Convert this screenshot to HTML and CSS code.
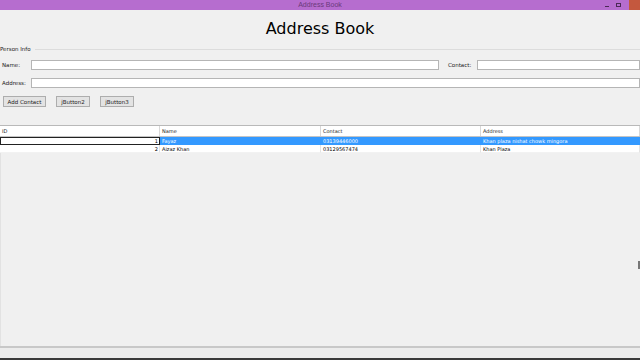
FILE: index.html
```html
<!DOCTYPE html>
<html>
<head>
<meta charset="utf-8">
<link rel="stylesheet" href="styles.css">
</head>
<body>
<div class="window">
  <div class="titlebar">
    <div class="tb-side"></div>
    <div class="tb-title">Address Book</div>
    <div class="tb-side tb-controls">
      <span class="tb-min"></span>
      <span class="tb-max"></span>
      <span class="tb-close"></span>
    </div>
  </div>
  <div class="heading">Address Book</div>
  <div class="group">
    <div class="group-head"><span class="legend">Person Info</span><span class="group-line"></span></div>
    <div class="row">
      <span class="label">Name:</span>
      <span class="field field-name"></span>
      <span class="label label-contact">Contact:</span>
      <span class="field field-contact"></span>
    </div>
    <div class="row">
      <span class="label">Address:</span>
      <span class="field field-grow"></span>
    </div>
    <div class="row buttons">
      <span class="btn btn-add">Add Contact</span>
      <span class="btn">jButton2</span>
      <span class="btn">jButton3</span>
    </div>
  </div>
  <div class="table-wrap">
    <div class="trow thead">
      <div class="cell">ID</div>
      <div class="cell">Name</div>
      <div class="cell">Contact</div>
      <div class="cell">Address</div>
    </div>
    <div class="trow selected">
      <div class="cell num focus">1</div>
      <div class="cell">Fayaz</div>
      <div class="cell">03139446000</div>
      <div class="cell">Khan plaza nishat chowk mingora</div>
    </div>
    <div class="trow">
      <div class="cell num">2</div>
      <div class="cell">Aizaz Khan</div>
      <div class="cell">03129567474</div>
      <div class="cell">Khan Plaza</div>
    </div>
    <div class="table-empty"><span class="edge-mark"></span></div>
  </div>
  <div class="footer"></div>
</div>
</body>
</html>
```

FILE: styles.css
```css
* { box-sizing: border-box; }
html, body { margin: 0; padding: 0; }
body {
  width: 640px;
  height: 360px;
  overflow: hidden;
  background: #f0f0f0;
  font-family: "DejaVu Sans", "Liberation Sans", sans-serif;
  color: #000;
}
.window { display: flex; flex-direction: column; height: 360px; }

.titlebar {
  height: 10px;
  background: #b66dcf;
  display: grid;
  grid-template-columns: 1fr auto 1fr;
  align-items: center;
}
.tb-title {
  font-size: 7px;
  line-height: 10px;
  color: #6a3a7c;
  font-family: "Liberation Sans", sans-serif;
}
.tb-controls { display: flex; justify-content: flex-end; align-items: center; height: 10px; }
.tb-min { width: 4px; height: 1px; background: #4a2a55; margin-top: 3px; margin-right: 7px; }
.tb-max { width: 5px; height: 4px; border: 1px solid #4a2a55; margin-right: 8px; }
.tb-close { width: 11px; height: 10px; background: #c4583e; }

.heading {
  height: 34px;
  display: flex;
  align-items: center;
  justify-content: center;
  font-family: "DejaVu Sans", sans-serif;
  font-size: 16px;
  padding-top: 2px;
}

.group { margin-top: 2px; display: flex; flex-direction: column; }
.group-head { height: 6px; display: flex; align-items: center; gap: 4px; margin-left: 0; }
.legend { font-size: 5.5px; line-height: 6px; color: #222; white-space: nowrap; }
.group-line { flex: 1; height: 1px; background: #dcdcdc; }

.row { display: flex; align-items: center; height: 10px; margin-top: 8px; }
.label { font-size: 5.5px; color: #222; width: 31px; padding-left: 2px; white-space: nowrap; }
.label-contact { width: 38px; padding-left: 9px; }
.field { height: 10px; background: #fff; border: 1px solid #b5b5b5; }
.field-name { width: 408px; }
.field-contact { flex: 1; }
.field-grow { flex: 1; }

.buttons { height: 11px; padding-left: 3px; gap: 10px; }
.btn {
  height: 11px;
  width: 34px;
  background: #e3e3e3;
  border: 1px solid #adadad;
  font-size: 5.5px;
  color: #222;
  display: flex;
  align-items: center;
  justify-content: center;
}
.btn-add { width: 43px; }

.table-wrap {
  margin-top: 18px;
  height: 223px;
  border-top: 1px solid #b9b9b9;
  border-bottom: 2px solid #c8c8c8;
  display: flex;
  flex-direction: column;
}
.trow { display: grid; grid-template-columns: 160px 161px 160px 1fr; height: 8px; background: #fff; }
.thead { height: 11px; border-bottom: 1px solid #c4c4c4; }
.cell {
  font-size: 5px;
  line-height: 8px;
  padding-left: 2px;
  white-space: nowrap;
  overflow: hidden;
  border-right: 1px solid #e4e4e4;
}
.thead .cell { line-height: 10px; color: #222; border-right: 1px solid #d8d8d8; }
.num { text-align: right; padding-right: 1px; }
.selected { background: #3399ff; }
.selected .cell { color: #fff; border-right-color: #3399ff; }
.selected .focus { background: #fff; color: #000; border: 1px solid #222; line-height: 6px; }
.trow:not(.thead):not(.selected) .cell { border-bottom: 1px solid #f2f2f2; }
.table-empty { flex: 1; background: #f0f0f0; border-left: 1px solid #e2e2e2; display: flex; justify-content: flex-end; align-items: flex-start; }
.edge-mark { width: 2px; height: 8px; background: #777; margin-top: 108px; }

.footer { flex: 1; background: #ececec; border-bottom: 2px solid #3a3a3a; }
```
